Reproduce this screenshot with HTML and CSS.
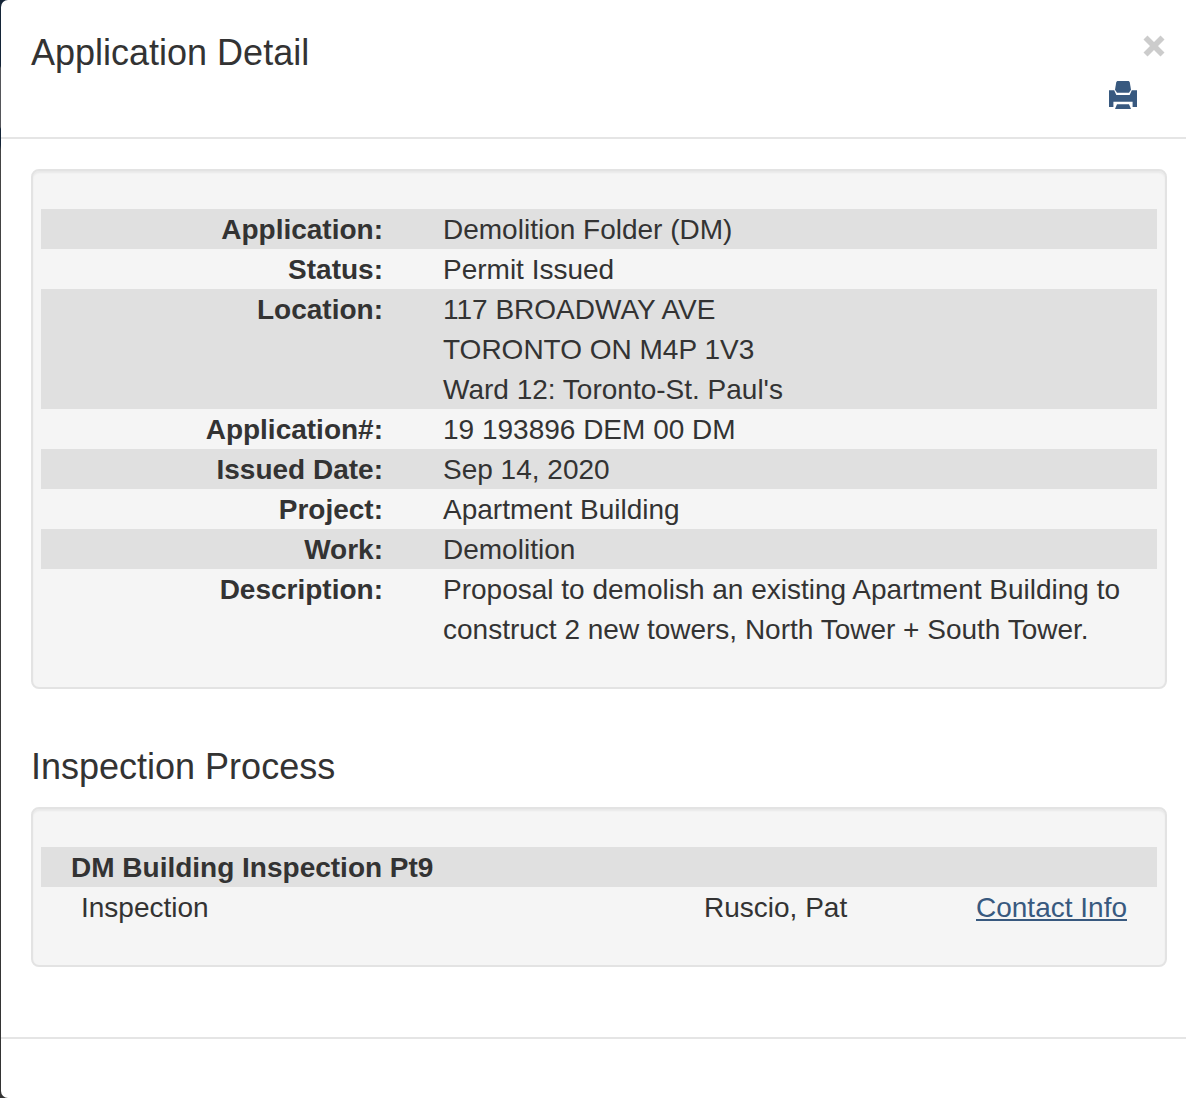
FILE: index.html
```
<!DOCTYPE html>
<html lang="en">

<head>
  <meta charset="UTF-8" />
  <meta name="viewport" content="width=device-width, initial-scale=1.0" />
  <title>Application Detail</title>
  <link rel="stylesheet" href="styles.css">
</head>

<body>
  <div class="modal">
    <header class="modal-header">
      <h1>Application Detail</h1>
      <div class="actions">
        <button class="close" type="button" aria-label="Close">
          <svg width="22" height="22" viewBox="0 0 22 22">
            <path d="M4.5 0.5L11 7L17.5 0.5L21.5 4.5L15 11L21.5 17.5L17.5 21.5L11 15L4.5 21.5L0.5 17.5L7 11L0.5 4.5Z" />
          </svg>
        </button>
        <button class="print" type="button" aria-label="Print">
          <svg width="28" height="28" viewBox="0 0 28 28">
            <path d="M8.3 0H19.7L20.7 1L22 8.7L20 11.7H8L6 8.7L7.3 1Z" />
            <path d="M0 9.3H5.2L7.3 14H20.7L22.8 9.3H28V26H23.6V20.8H4.4V26H0Z" />
            <path d="M8 23.3H20L22 28H6Z" />
          </svg>
        </button>
      </div>
    </header>

    <main class="modal-body">
      <dl class="well details">
        <div class="row"><dt>Application:</dt><dd>Demolition Folder (DM)</dd></div>
        <div class="row"><dt>Status:</dt><dd>Permit Issued</dd></div>
        <div class="row"><dt>Location:</dt><dd>117 BROADWAY AVE<br>TORONTO ON M4P 1V3<br>Ward 12: Toronto-St. Paul's</dd></div>
        <div class="row"><dt>Application#:</dt><dd>19 193896 DEM 00 DM</dd></div>
        <div class="row"><dt>Issued Date:</dt><dd>Sep 14, 2020</dd></div>
        <div class="row"><dt>Project:</dt><dd>Apartment Building</dd></div>
        <div class="row"><dt>Work:</dt><dd>Demolition</dd></div>
        <div class="row"><dt>Description:</dt><dd>Proposal to demolish an existing Apartment Building to construct 2 new towers, North Tower + South Tower.</dd></div>
      </dl>

      <h2>Inspection Process</h2>
      <div class="well">
        <h3>DM Building Inspection Pt9</h3>
        <div class="inspection">
          <span>Inspection</span>
          <span>Ruscio, Pat</span>
          <a href="#">Contact Info</a>
        </div>
      </div>
    </main>

    <footer class="modal-footer"></footer>
  </div>
</body>

</html>
```

FILE: styles.css
```
:root {
  --text: #333333;
  --blue: #38597f;
  --border: #e5e5e5;
  --well: #f5f5f5;
  --stripe: #e0e0e0;
}

* {
  box-sizing: border-box;
}

body {
  margin: 0;
  height: 1098px;
  padding-left: 1px;
  overflow: hidden;
  background: linear-gradient(180deg, #142437 0, #142437 66px, #55565a 68px, #55565a 127px, #142437 129px, #142437 145px, #444444 150px, #333333 100%);
  color: var(--text);
  font-family: "Liberation Sans", Arial, sans-serif;
  font-size: 28px;
  line-height: 40px;
}

h1,
h2,
h3,
dl,
dd {
  margin: 0;
}

h1,
h2 {
  font-size: 36px;
  font-weight: normal;
}

.modal {
  height: 100%;
  display: flex;
  flex-direction: column;
  border-radius: 7px 0 0 7px;
  background: #ffffff;
}

.modal-header {
  display: flex;
  justify-content: space-between;
  height: 139px;
  padding: 33px 21px 0 30px;
  border-bottom: 2px solid var(--border);
}

.actions {
  display: flex;
  flex-direction: column;
  align-items: flex-end;
  gap: 24px;
  padding-top: 2px;
}

.actions button {
  display: flex;
  padding: 0;
  border: none;
  background: none;
  cursor: pointer;
}

.close {
  fill: #cccccc;
}

.actions .print {
  margin-right: 28px;
  fill: var(--blue);
}

.modal-body {
  flex: 1;
  padding: 30px 19px 0 30px;
}

.well {
  padding: 38px 8px;
  border: 2px solid #e3e3e3;
  border-radius: 8px;
  background: var(--well);
  box-shadow: inset 0 2px 2px rgba(0, 0, 0, 0.05);
}

.row {
  display: flex;
}

.row:nth-child(odd) {
  background: var(--stripe);
}

dt,
dd {
  padding-top: 1px;
  margin-bottom: -1px;
}

dt {
  width: 342px;
  margin-right: 60px;
  font-weight: bold;
  text-align: right;
}

dd {
  flex: 1;
}

h2 {
  margin: 58px 0 20px;
}

h3 {
  height: 40px;
  padding: 1px 0 0 30px;
  background: var(--stripe);
  font-size: 28px;
}

.inspection {
  display: grid;
  grid-template-columns: 623px 272px 1fr;
  height: 40px;
  padding: 1px 0 0 40px;
}

.inspection a {
  color: var(--blue);
}

.modal-footer {
  height: 61px;
  border-top: 2px solid var(--border);
}
```
